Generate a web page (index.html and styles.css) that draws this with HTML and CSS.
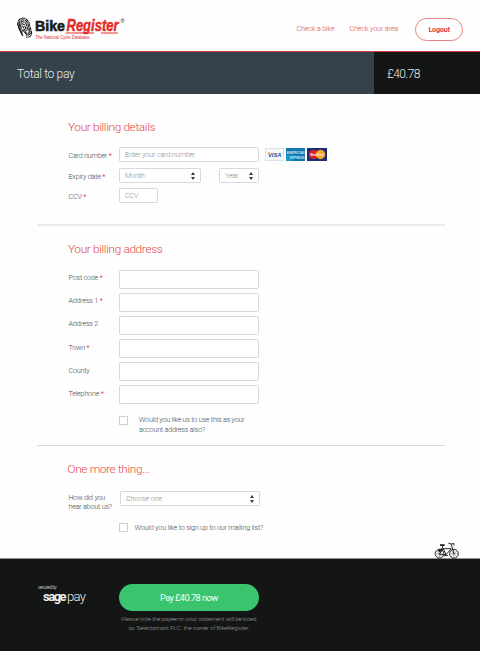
FILE: index.html
```html
<!DOCTYPE html>
<html lang="en">
<head>
<meta charset="utf-8">
<title>BikeRegister</title>
<link rel="stylesheet" href="styles.css">
</head>
<body>
<header class="header">
  <svg class="logo" width="110" height="28" viewBox="0 0 110 28">
    <g fill="none" stroke="#222" stroke-width="1.1" stroke-dasharray="4 .5">
      <path d="M1 9C-1 2 7-2 11 4c2 3 1 5 3 9 2 5-1 8-5 7"/>
      <path d="M2 12C0 6 4 0 9 4c3 3 2 6 4 10 1 3-1 5-4 4"/>
      <path d="M3 14C1 9 3 3 7 5c4 2 2 6 5 9 1 2-1 3-3 2"/>
      <path d="M4 16C2 11 3 6 6 7c3 1 2 5 4 7"/>
      <path d="M5 18c-1-3-2-7 0-9 2 0 2 4 4 7"/>
      <path d="M6 19c-2-3-1-5 0-6 1 1 2 4 5 5"/>
    </g>
    <text class="logo-bike" x="18" y="14" textLength="30" lengthAdjust="spacingAndGlyphs">Bike</text>
    <text class="logo-register" x="49.500" y="13.500" textLength="52" lengthAdjust="spacingAndGlyphs">Register</text>
    <path d="M48.800 15.400H77l-.4 1.200H48.500zM84 15.400H101l-.4 1.200H84z" fill="#e12d2b"/>
    <text class="logo-tag" x="18.500" y="21.500" textLength="54" lengthAdjust="spacingAndGlyphs">The National Cycle Database</text>
    <text class="logo-mark" x="103.500" y="5.500">®</text>
  </svg>
  <nav class="nav">
    <a class="nav-link">Check a bike</a>
    <a class="nav-link nav-area">Check your area</a>
    <a class="logout">Logout</a>
  </nav>
</header>
<div class="total"><div class="total-label">Total to pay</div><div class="total-value">£40.78</div></div>
<main>
  <section class="section details">
    <h2>Your billing details</h2>
    <div class="row"><label class="label">Card number <b>*</b></label><div class="field">Enter your card number</div>
      <svg class="cards" width="62" height="13" viewBox="0 0 62 13">
        <rect x=".5" y=".5" width="18" height="12" fill="#f7f8f9" stroke="#dde1e5"/>
        <text class="visa" x="3" y="8.700" textLength="13.500" lengthAdjust="spacingAndGlyphs">VISA</text>
        <path d="M2.500 4.300h2l.7 2z" fill="#efac35"/>
        <path fill="#1674ad" d="M21 0h19v13H21z"/><path fill="#1b96cc" d="M21 7h10l-4 6h-6z"/>
        <text class="amex" x="21.500" y="6.400" textLength="18" lengthAdjust="spacingAndGlyphs">AMERICAN</text>
        <text class="amex" x="25" y="10.700" textLength="14.500" lengthAdjust="spacingAndGlyphs">EXPRESS</text>
        <path fill="#1c2d70" d="M42 0h20v13H42z"/><circle cx="48.500" cy="6.500" r="4.700" fill="#df1f2b"/><circle cx="55.500" cy="6.500" r="4.700" fill="#f7a62a"/>
        <text class="mc" x="45.500" y="7.700" textLength="13" lengthAdjust="spacingAndGlyphs">MasterCard</text>
      </svg>
    </div>
    <div class="row"><label class="label">Expiry date <b>*</b></label><div class="field month">Month<i class="arrows"></i></div><div class="field year">Year<i class="arrows"></i></div></div>
    <div class="row"><label class="label">CCV <b>*</b></label><div class="field ccv">CCV</div></div>
  </section>
  <section class="section address">
    <h2>Your billing address</h2>
    <div class="row tall"><label class="label">Post code <b>*</b></label><div class="field"></div></div>
    <div class="row tall"><label class="label">Address 1 <b>*</b></label><div class="field"></div></div>
    <div class="row tall"><label class="label">Address 2</label><div class="field"></div></div>
    <div class="row tall"><label class="label low">Town <b>*</b></label><div class="field"></div></div>
    <div class="row tall"><label class="label low">County</label><div class="field"></div></div>
    <div class="row tall"><label class="label low">Telephone <b>*</b></label><div class="field"></div></div>
    <div class="check"><span class="box"></span><p>Would you like us to use this as your<br>account address also?</p></div>
  </section>
  <section class="section more">
    <h2>One more thing...</h2>
    <div class="row"><label class="label source">How did you<br>hear about us?</label><div class="field choose">Choose one<i class="arrows"></i></div></div>
    <div class="check mail"><span class="box"></span><p>Would you like to sign up to our mailing list?</p></div>
    <svg class="bike" width="26" height="17" viewBox="0 0 28 18" fill="none" stroke="#171b19">
      <g stroke-width="1"><circle cx="6" cy="12.500" r="4.700"/><circle cx="21.500" cy="12.500" r="4.700"/></g>
      <path stroke-width=".35" d="M6 8v9M1.500 12.500h9M3 9.500l6 6M9 9.500l-6 6M21.500 8v9M17 12.500h9M18.500 9.500l6 6M24.500 9.500l-6 6"/>
      <path stroke-width="1" d="M6 12.500 10 7h8.500l-5.500 6.500H6M10 7l3 6.500M9.500 7 9 3.500M21.500 12.500 18.500 2M15.500 1.200l3 .8 3-.5v2M11 14.500h4"/>
      <path stroke-width="1.800" d="M6.500 3.300h5M4.500 8.500l5-1M5 10l3-1"/>
    </svg>
  </section>
</main>
<footer class="footer">
  <div class="sage"><small>secured by</small><div><strong>sage</strong><span>pay</span></div></div>
  <div class="pay"><div class="pay-button">Pay £40.78 now</div><p class="note">Please note the payee on your statement will be listed<br>as 'Selectamark PLC', the owner of BikeRegister.</p></div>
</footer>
</body>
</html>
```
FILE: styles.css
```css
* { box-sizing: border-box; }
body { margin: 0; width: 480px; height: 651px; overflow: hidden; background: #fefefe; color: #3c4751; font: 300 7.200px/9px Roboto, "Liberation Sans", sans-serif; font-stretch: 88%; letter-spacing: -.22px; }
h2, p { margin: 0; font-weight: 300; }
.header { height: 52px; border-bottom: 1px solid #cf3c36; display: flex; justify-content: space-between; align-items: flex-start; padding: 17px 17px 0; }
.logo { overflow: visible; letter-spacing: 0; }
.logo-bike { font: bold 15px "Liberation Sans", sans-serif; fill: #1d1b1c; stroke: #1d1b1c; stroke-width: .6px; }
.logo-register { font: italic bold 16.500px "Liberation Sans", sans-serif; fill: #e12d2b; stroke: #e12d2b; stroke-width: .5px; }
.logo-tag { font: 4.800px "Liberation Sans", sans-serif; fill: #e12d2b; }
.logo-mark { font: 5.500px "Liberation Sans", sans-serif; fill: #222; }
.nav { display: flex; align-items: center; margin-top: 1px; color: #de4b46; }
.nav-link { letter-spacing: -.14px; position: relative; top: -1px; }
.nav-area { margin-left: 15px; }
.logout { margin-left: 17px; width: 48px; height: 23px; border: 1px solid #e98480; border-radius: 12px; text-align: center; line-height: 22px; font-weight: 700; color: #d8413c; }
.total { height: 42px; display: flex; background: #36424b; color: #e8ebec; font-size: 12px; line-height: 44px; letter-spacing: -.34px; }
.total-label { flex: 1; padding-left: 17px; }
.total-value { width: 106px; padding-left: 13px; background: #131615; letter-spacing: -.6px; }
.section { margin: 0 35px 0 37px; padding-left: 31px; border-bottom: 1px solid #d5dce1; }
.details { height: 132px; padding-top: 26px; border-bottom: 2px solid #e6ebef; }
.address { height: 220px; padding-top: 16px; }
.more { height: 112px; padding-top: 16px; border: 0; position: relative; }
h2 { color: #df4944; font-size: 11.800px; line-height: 14px; letter-spacing: -.33px; white-space: nowrap; }
.row { display: flex; height: 15px; }
.label { width: 51px; flex: none; padding: 4px 0 0 .5px; white-space: nowrap; }
.source { padding-top: 2px; }
.label b { color: #f04a45; font-weight: 400; }
.field { position: relative; width: 140px; height: 15px; border: 1px solid #d6d8da; border-radius: 1.500px; padding-left: 5px; line-height: 14px; letter-spacing: -.16px; color: #8a8a8a; background: #fff; white-space: nowrap; }
.details .row { margin-bottom: 5px; }
.details .row + .row { margin-bottom: 6px; }
.details h2 { margin-bottom: 13px; }
.details .row:nth-child(3) { margin-top: 6px; margin-bottom: 5px; }
.details .row:nth-child(2) { margin-bottom: 0; }
.month { width: 82px; }
.year { width: 40px; margin-left: 18px; }
.ccv { width: 39px; }
.arrows { position: absolute; right: 4px; top: 3px; width: 5px; height: 7px; }
.arrows::before, .arrows::after { content: ""; position: absolute; left: 0; border: 2.500px solid transparent; }
.arrows::before { top: -2.500px; border-bottom: 3px solid #303a42; }
.arrows::after { top: 4.500px; border-top: 3px solid #303a42; }
.cards { margin: 1px 0 0 6px; overflow: visible; letter-spacing: 0; }
.visa { font: italic bold 5.500px "Liberation Sans", sans-serif; fill: #1c579b; }
.amex { font: bold 4px "Liberation Sans", sans-serif; fill: #c5e5f3; }
.mc { font: bold 3.500px "Liberation Sans", sans-serif; fill: #fff; }
.address h2 { margin-bottom: 14px; }
.tall { height: 23px; }
.tall .field { height: 19px; }
.tall .label { padding-top: 3px; }
.tall .low { padding-top: 4px; }
.check { display: flex; margin: 8px 0 0 51px; }
.box { width: 9px; height: 9px; border: 1px solid #c6d1d8; background: #fff; }
.check p { margin: -1px 0 0 11px; line-height: 9.500px; white-space: nowrap; }
.more h2 { margin: 0 0 15px -.5px; }
.choose { margin-left: 1px; }
.mail { margin-top: 17px; }
.mail p { margin: 0 0 0 6.500px; letter-spacing: -.18px; }
.bike { position: absolute; right: -15px; bottom: -1px; z-index: 1; }
.footer { height: 93px; background: #131615; border-top: 1px solid #8c908e; display: flex; padding: 25px 0 0 38px; }
.sage { width: 80.500px; padding-top: 1px; color: #eee; }
.sage small { display: block; font-size: 4.500px; line-height: 5px; letter-spacing: -.3px; }
.sage div { display: flex; margin-left: 5px; font-size: 13px; line-height: 13px; letter-spacing: -1.500px; }
.sage strong { font-weight: 700; }
.sage span { margin-left: 2px; letter-spacing: -.7px; }
.pay { width: 140.500px; text-align: center; }
.pay-button { height: 27px; border-radius: 14px; background: #3ac46d; color: #f5fff8; font-size: 9.300px; line-height: 27px; letter-spacing: -.6px; font-weight: 400; }
.note { margin-top: 4px; font-size: 6.200px; line-height: 8.500px; letter-spacing: -.18px; color: #9a9c9b; white-space: nowrap; }
```
